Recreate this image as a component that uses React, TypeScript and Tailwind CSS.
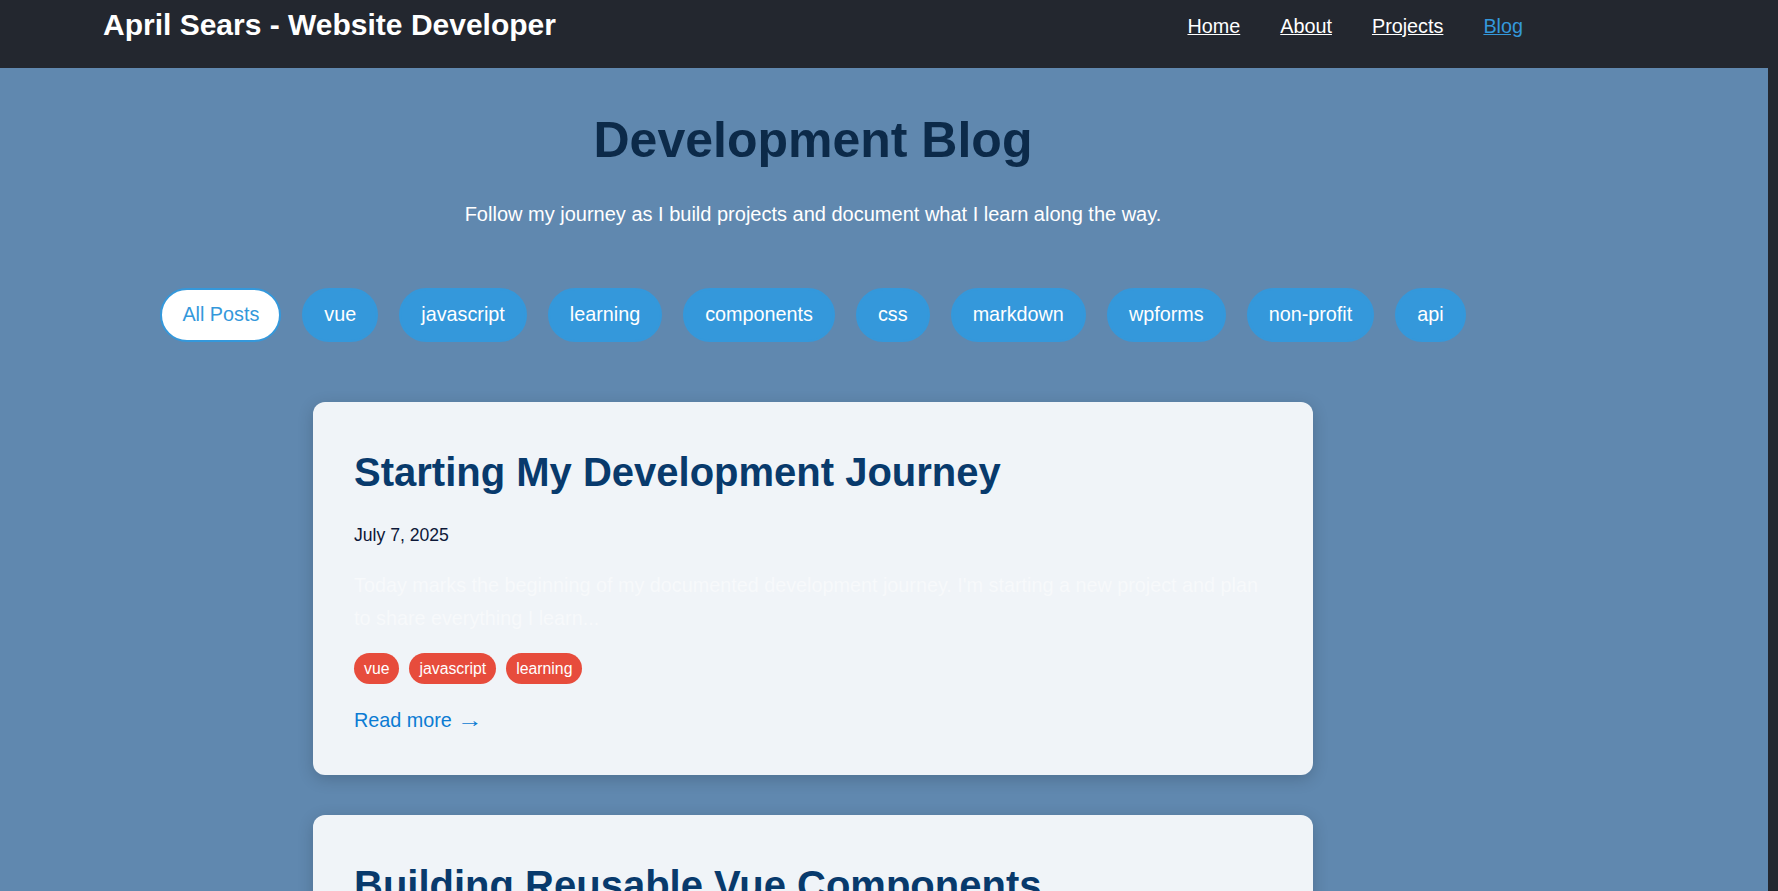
import React from "react";

const tags = [
  "vue",
  "javascript",
  "learning",
  "components",
  "css",
  "markdown",
  "wpforms",
  "non-profit",
  "api",
];

function Card({
  title,
  date,
  excerpt,
  tags,
}: {
  title: string;
  date: string;
  excerpt: string;
  tags: string[];
}) {
  return (
    <article className="w-[1000px] mx-auto rounded-[12px] bg-[#f0f4f8] shadow-[0_4px_16px_rgba(0,0,0,0.18)] px-[41px] pt-[47px] pb-[43px]">
      <h2 className="text-[40px] leading-[46px] font-bold text-[#083a6c]">{title}</h2>
      <p className="mt-[30px] text-[17.6px] leading-[20.2px] text-[#0d1838]">{date}</p>
      <p className="mt-[24px] text-[19.8px] leading-[33px] text-[#f7f9fb]">{excerpt}</p>
      <div className="mt-[18px] flex gap-[10px]">
        {tags.map((t) => (
          <span
            key={t}
            className="rounded-full bg-[#e74c3c] px-[10px] py-[6px] text-[15.8px] leading-[19px] text-white"
          >
            {t}
          </span>
        ))}
      </div>
      <a className="mt-[25px] block text-[19.8px] leading-[23px] text-[#0b7bd3]">
        Read more <span className="inline-block scale-x-[1.3] origin-left">→</span>
      </a>
    </article>
  );
}

export default function App() {
  return (
    <div
      className="h-[891px] overflow-hidden bg-[#23272f] flex flex-col"
      style={{ fontFamily: '"Liberation Sans", Arial, sans-serif' }}
    >
      <header className="h-[68px] shrink-0 bg-[#23272f]">
        <div className="ml-[103px] w-[1420px] flex justify-between items-start">
          <h1 className="pt-[8px] text-[30px] leading-[34.5px] font-bold text-white">
            April Sears - Website Developer
          </h1>
          <nav className="pt-[15px] flex gap-[40px] text-[19.8px] leading-[23px]">
            <a className="text-white underline">Home</a>
            <a className="text-white underline">About</a>
            <a className="text-white underline">Projects</a>
            <a className="text-[#3498db] underline">Blog</a>
          </nav>
        </div>
      </header>
      <main className="flex-1 mr-[10px] bg-[#6088af]">
        <div className="ml-[103px] w-[1420px] flex flex-col items-center">
          <h2 className="mt-[44px] text-[50px] leading-[57.5px] font-bold text-[#0c2a49]">
            Development Blog
          </h2>
          <p className="mt-[33px] text-[20px] leading-[23px] text-white">
            Follow my journey as I build projects and document what I learn along the way.
          </p>
          <div className="mt-[62px] flex flex-wrap justify-center gap-[21px]">
            <button className="rounded-full border-2 border-[#3498db] bg-white px-[20px] py-[13.5px] text-[19.8px] leading-[23px] text-[#3498db]">
              All Posts
            </button>
            {tags.map((t) => (
              <button
                key={t}
                className="rounded-full border-2 border-[#3498db] bg-[#3498db] px-[20px] py-[13.5px] text-[19.8px] leading-[23px] text-white"
              >
                {t}
              </button>
            ))}
          </div>
          <div className="mt-[60px] flex flex-col gap-[40px] w-full">
            <Card
              title="Starting My Development Journey"
              date="July 7, 2025"
              excerpt="Today marks the beginning of my documented development journey. I'm starting a new project and plan to share everything I learn..."
              tags={["vue", "javascript", "learning"]}
            />
            <Card
              title="Building Reusable Vue Components"
              date="July 14, 2025"
              excerpt="Components are the building blocks of every Vue application. Here is what I learned while building a small library of reusable pieces..."
              tags={["vue", "components"]}
            />
          </div>
        </div>
      </main>
    </div>
  );
}
